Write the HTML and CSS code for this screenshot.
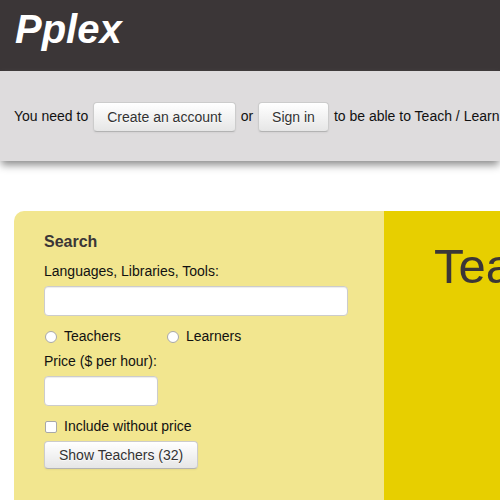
FILE: index.html
```html
<!DOCTYPE html>
<html lang="en">
<head>
<meta charset="utf-8">
<title>Pplex</title>
<link rel="stylesheet" href="styles.css">
</head>
<body>
<header class="brand"><h1 class="logo">Pplex</h1></header>
<section class="account">
  <span>You need to</span>
  <button class="btn" type="button">Create an account</button>
  <span>or</span>
  <button class="btn" type="button">Sign in</button>
  <span>to be able to Teach / Learn</span>
</section>
<main class="panel">
  <form class="search">
    <h2 class="search-title">Search</h2>
    <label class="label" for="skills">Languages, Libraries, Tools:</label>
    <input class="field" id="skills" type="text">
    <div class="roles">
      <label class="option"><input class="tick" type="radio" name="role">Teachers</label>
      <label class="option"><input class="tick" type="radio" name="role">Learners</label>
    </div>
    <label class="label" for="price">Price ($ per hour):</label>
    <input class="field field-short" id="price" type="text">
    <label class="option"><input class="tick" type="checkbox">Include without price</label>
    <button class="btn btn-submit" type="button">Show Teachers (32)</button>
  </form>
  <section class="hero"><h2 class="hero-title">Tea</h2></section>
</main>
</body>
</html>
```
FILE: styles.css
```css
* { box-sizing: border-box; }
html { overflow: hidden; }
body {
  display: flex;
  flex-direction: column;
  min-height: 100vh;
  margin: 0;
  background: #fff;
  color: #111;
  font: 14px/20px "Liberation Sans", Arial, sans-serif;
}
h1, h2 { margin: 0; }
.brand { padding: 9px 15px 22px; background: #3b3637; }
.logo { color: #fff; font-size: 40px; line-height: 40px; font-style: italic; }
.account {
  display: flex;
  gap: 5px;
  padding: 31px 0 29px 14px;
  background: #dedcdd;
  box-shadow: 0 5px 8px -1px #8c8c8c;
  white-space: nowrap;
}
.account span { padding-top: 4px; }
.btn {
  height: 30px;
  padding: 0 13px;
  border: 1px solid #ccc;
  border-bottom-color: #b3b3b3;
  border-radius: 4px;
  background: linear-gradient(#fff, #e6e6e6);
  box-shadow: inset 0 1px 0 #fff, 0 1px 2px rgba(0, 0, 0, .05);
  color: #333;
  font: inherit;
  text-shadow: 0 1px 1px rgba(255, 255, 255, .75);
}
.panel {
  display: flex;
  flex: 1;
  margin: 50px 0 0 14px;
  border-radius: 10px 0 0 0;
  overflow: hidden;
}
.search {
  flex: 0 0 370px;
  padding: 21px 36px 20px 30px;
  background: #f2e68f;
}
.search-title { margin-bottom: 9px; color: #3b3637; font-size: 16px; line-height: 20px; }
.label { display: block; margin-bottom: 5px; }
.field {
  display: block;
  width: 100%;
  height: 30px;
  margin-bottom: 10px;
  padding: 4px 6px;
  border: 1px solid #ccc;
  border-radius: 4px;
  background: #fff;
  box-shadow: inset 0 1px 1px rgba(0, 0, 0, .075);
  font: inherit;
}
.field-short { width: 114px; }
.roles { display: grid; grid-template-columns: 122px 1fr; margin-bottom: 5px; }
.option { display: flex; }
.tick {
  appearance: none;
  flex: none;
  width: 12px;
  height: 12px;
  margin: 5px 7px 0 1px;
  border: 1px solid #a8a8a8;
  border-radius: 2px;
  background: #fff;
}
.tick[type="radio"] { border-radius: 50%; }
.tick:checked { background: #3b3637; }
.btn-submit { display: block; height: 28px; margin-top: 5px; padding: 0 14px; }
.hero { flex: 1; padding: 29px 0 0 50px; background: #e7cf00; }
.hero-title { color: #3b3637; font-size: 49px; line-height: 52px; font-weight: 400; }
```
